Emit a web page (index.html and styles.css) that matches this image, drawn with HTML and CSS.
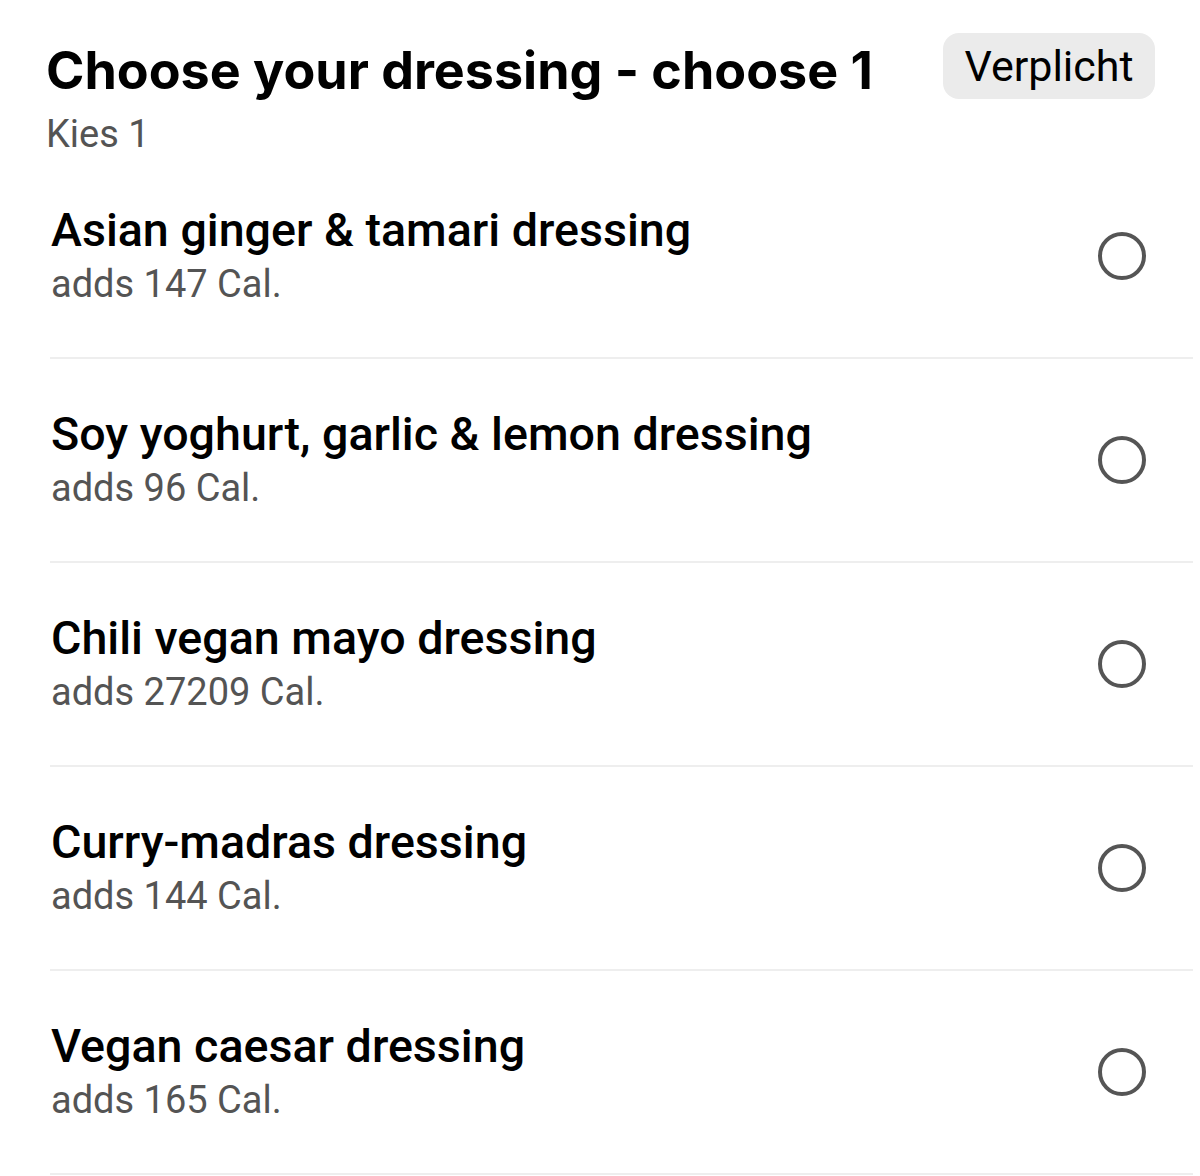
FILE: index.html
```html
<!DOCTYPE html>
<html lang="en">
<head>
<meta charset="utf-8">
<title>Choose your dressing</title>
<link rel="stylesheet" href="styles.css">
</head>
<body>
<section class="group">
  <header class="head">
    <div class="head-text">
      <h1 class="title">Choose your dressing - choose 1</h1>
      <div class="hint">Kies 1</div>
    </div>
    <span class="badge">Verplicht</span>
  </header>
  <ul class="options">
    <li class="option">
      <div class="opt-text">
        <div class="opt-name">Asian ginger &amp; tamari dressing</div>
        <div class="opt-cal">adds 147 Cal.</div>
      </div>
      <span class="radio"></span>
    </li>
    <li class="option">
      <div class="opt-text">
        <div class="opt-name">Soy yoghurt, garlic &amp; lemon dressing</div>
        <div class="opt-cal">adds 96 Cal.</div>
      </div>
      <span class="radio"></span>
    </li>
    <li class="option">
      <div class="opt-text">
        <div class="opt-name">Chili vegan mayo dressing</div>
        <div class="opt-cal">adds 27209 Cal.</div>
      </div>
      <span class="radio"></span>
    </li>
    <li class="option">
      <div class="opt-text">
        <div class="opt-name">Curry-madras dressing</div>
        <div class="opt-cal">adds 144 Cal.</div>
      </div>
      <span class="radio"></span>
    </li>
    <li class="option">
      <div class="opt-text">
        <div class="opt-name">Vegan caesar dressing</div>
        <div class="opt-cal">adds 165 Cal.</div>
      </div>
      <span class="radio"></span>
    </li>
  </ul>
</section>
</body>
</html>
```

FILE: styles.css
```css
html, body {
  margin: 0;
  padding: 0;
  background: #ffffff;
}
body {
  font-family: Roboto, "Liberation Sans", sans-serif;
  color: #000000;
}
.group {
  width: 1200px;
}
.head {
  display: flex;
  justify-content: space-between;
  align-items: flex-start;
  height: 155px;
  box-sizing: border-box;
  padding: 33px 45px 0 46px;
}
.title {
  margin: 0;
  font-family: Inter, "Noto Sans", sans-serif;
  font-weight: 700;
  font-size: 52px;
  line-height: 68px;
  letter-spacing: 0;
  margin-top: 4px;
}
.hint {
  font-size: 38px;
  line-height: 44px;
  color: #545454;
  margin-top: 7px;
}
.badge {
  display: flex;
  align-items: center;
  justify-content: center;
  width: 212px;
  height: 66px;
  box-sizing: border-box;
  background: #ebebeb;
  border-radius: 16px;
  font-size: 43px;
  font-weight: 400;
  color: #000;
}
.options {
  list-style: none;
  margin: 0;
  padding: 0 7px 0 50px;
}
.option {
  display: flex;
  align-items: center;
  justify-content: space-between;
  height: 204px;
  box-sizing: border-box;
  border-bottom: 2px solid #eeeeee;
}
.opt-text {
  padding-left: 1px;
}
.opt-name {
  font-size: 46.6px;
  font-weight: 500;
  line-height: 56px;
}
.opt-cal {
  font-size: 38px;
  line-height: 52px;
  color: #545454;
}
.radio {
  width: 48px;
  height: 48px;
  box-sizing: border-box;
  border: 4px solid #555555;
  border-radius: 50%;
  margin-right: 47px;
}
```
